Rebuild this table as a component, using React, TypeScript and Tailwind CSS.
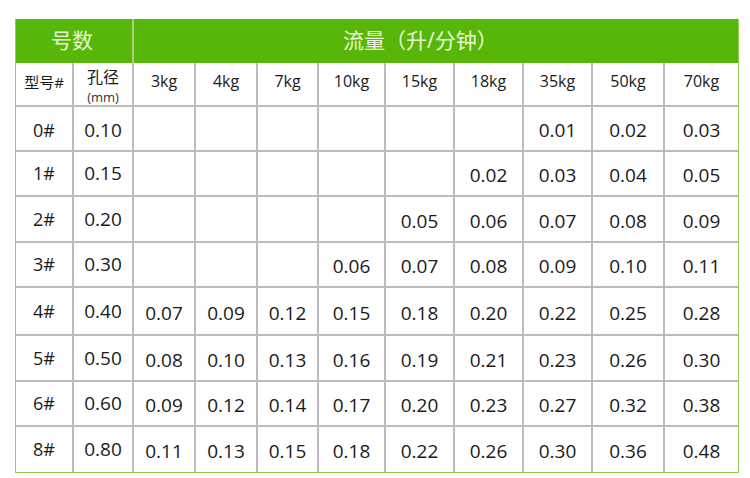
import React from "react";

const kgs = ["3kg", "4kg", "7kg", "10kg", "15kg", "18kg", "35kg", "50kg", "70kg"];

const rows: { id: string; hole: string; flow: string[] }[] = [
  { id: "0#", hole: "0.10", flow: ["", "", "", "", "", "", "0.01", "0.02", "0.03"] },
  { id: "1#", hole: "0.15", flow: ["", "", "", "", "", "0.02", "0.03", "0.04", "0.05"] },
  { id: "2#", hole: "0.20", flow: ["", "", "", "", "0.05", "0.06", "0.07", "0.08", "0.09"] },
  { id: "3#", hole: "0.30", flow: ["", "", "", "0.06", "0.07", "0.08", "0.09", "0.10", "0.11"] },
  { id: "4#", hole: "0.40", flow: ["0.07", "0.09", "0.12", "0.15", "0.18", "0.20", "0.22", "0.25", "0.28"] },
  { id: "5#", hole: "0.50", flow: ["0.08", "0.10", "0.13", "0.16", "0.19", "0.21", "0.23", "0.26", "0.30"] },
  { id: "6#", hole: "0.60", flow: ["0.09", "0.12", "0.14", "0.17", "0.20", "0.23", "0.27", "0.32", "0.38"] },
  { id: "8#", hole: "0.80", flow: ["0.11", "0.13", "0.15", "0.18", "0.22", "0.26", "0.30", "0.36", "0.48"] },
];

const rowHeights = ["h-[45px]", "h-[45px]", "h-[46px]", "h-[45px]", "h-[48px]", "h-[46px]", "h-[45px]", "h-[45px]"];

const font = { fontFamily: '"Open Sans", "Noto Sans CJK SC", sans-serif' };

export default function App() {
  return (
    <div className="w-[750px] h-[478px] bg-white pt-[19px] pl-[15px]" style={font}>
      <div className="w-[724px] border-x border-b border-[#8fcb55]">
        {/* green title bar */}
        <div className="flex h-[44px] bg-[#58b608] text-[#e6f6d6] text-[21px]">
          <div className="w-[118px] flex items-center justify-center pr-[4px] border-r-2 border-[#a9cf86]">
            号数
          </div>
          <div className="flex-1 flex items-center pl-[209px]">流量（升/分钟）</div>
        </div>

        <div className="grid grid-cols-[58px_60px_62px_62px_61px_67px_69px_69px_69px_72px_73px] text-[#1a1a1a]">
          {/* sub header */}
          <div className="h-[44px] border-r-2 border-b-2 border-[#bcbcbc] flex justify-center pt-[8px] text-[15px] leading-[22px]">
            型号#
          </div>
          <div className="h-[44px] border-r-2 border-b-2 border-[#bcbcbc] flex flex-col items-center pt-[3px] overflow-hidden">
            <span className="text-[16px] leading-[22px]">孔径</span>
            <span className="mt-[2px] text-[13px] leading-[15px] text-[#333]">(mm)</span>
          </div>
          {kgs.map((k, i) => (
            <div
              key={k}
              className={`h-[44px] border-b-2 border-[#bcbcbc] flex justify-center pt-[7px] text-[16px] leading-[22px] ${
                i === kgs.length - 1 ? "" : "border-r-2"
              }`}
            >
              {k}
            </div>
          ))}

          {rows.map((r, ri) => {
            const last = ri === rows.length - 1;
            const h = rowHeights[ri];
            const bb = last ? "" : "border-b-2";
            const top = ri === 0 ? "pt-[4px]" : "";
            return (
              <React.Fragment key={r.id}>
                <div className={`${h} ${bb} ${top} border-r-2 border-[#bcbcbc] flex items-center justify-center text-[18px]`}>
                  {r.id}
                </div>
                <div className={`${h} ${bb} ${top} border-r-2 border-[#bcbcbc] flex items-center justify-center text-[19px]`}>
                  {r.hole}
                </div>
                {r.flow.map((v, ci) => (
                  <div
                    key={ci}
                    className={`${h} ${bb} border-[#bcbcbc] flex items-center justify-center pt-[4px] text-[19px] ${
                      ci === r.flow.length - 1 ? "" : "border-r-2"
                    }`}
                  >
                    {v}
                  </div>
                ))}
              </React.Fragment>
            );
          })}
        </div>
      </div>
    </div>
  );
}
